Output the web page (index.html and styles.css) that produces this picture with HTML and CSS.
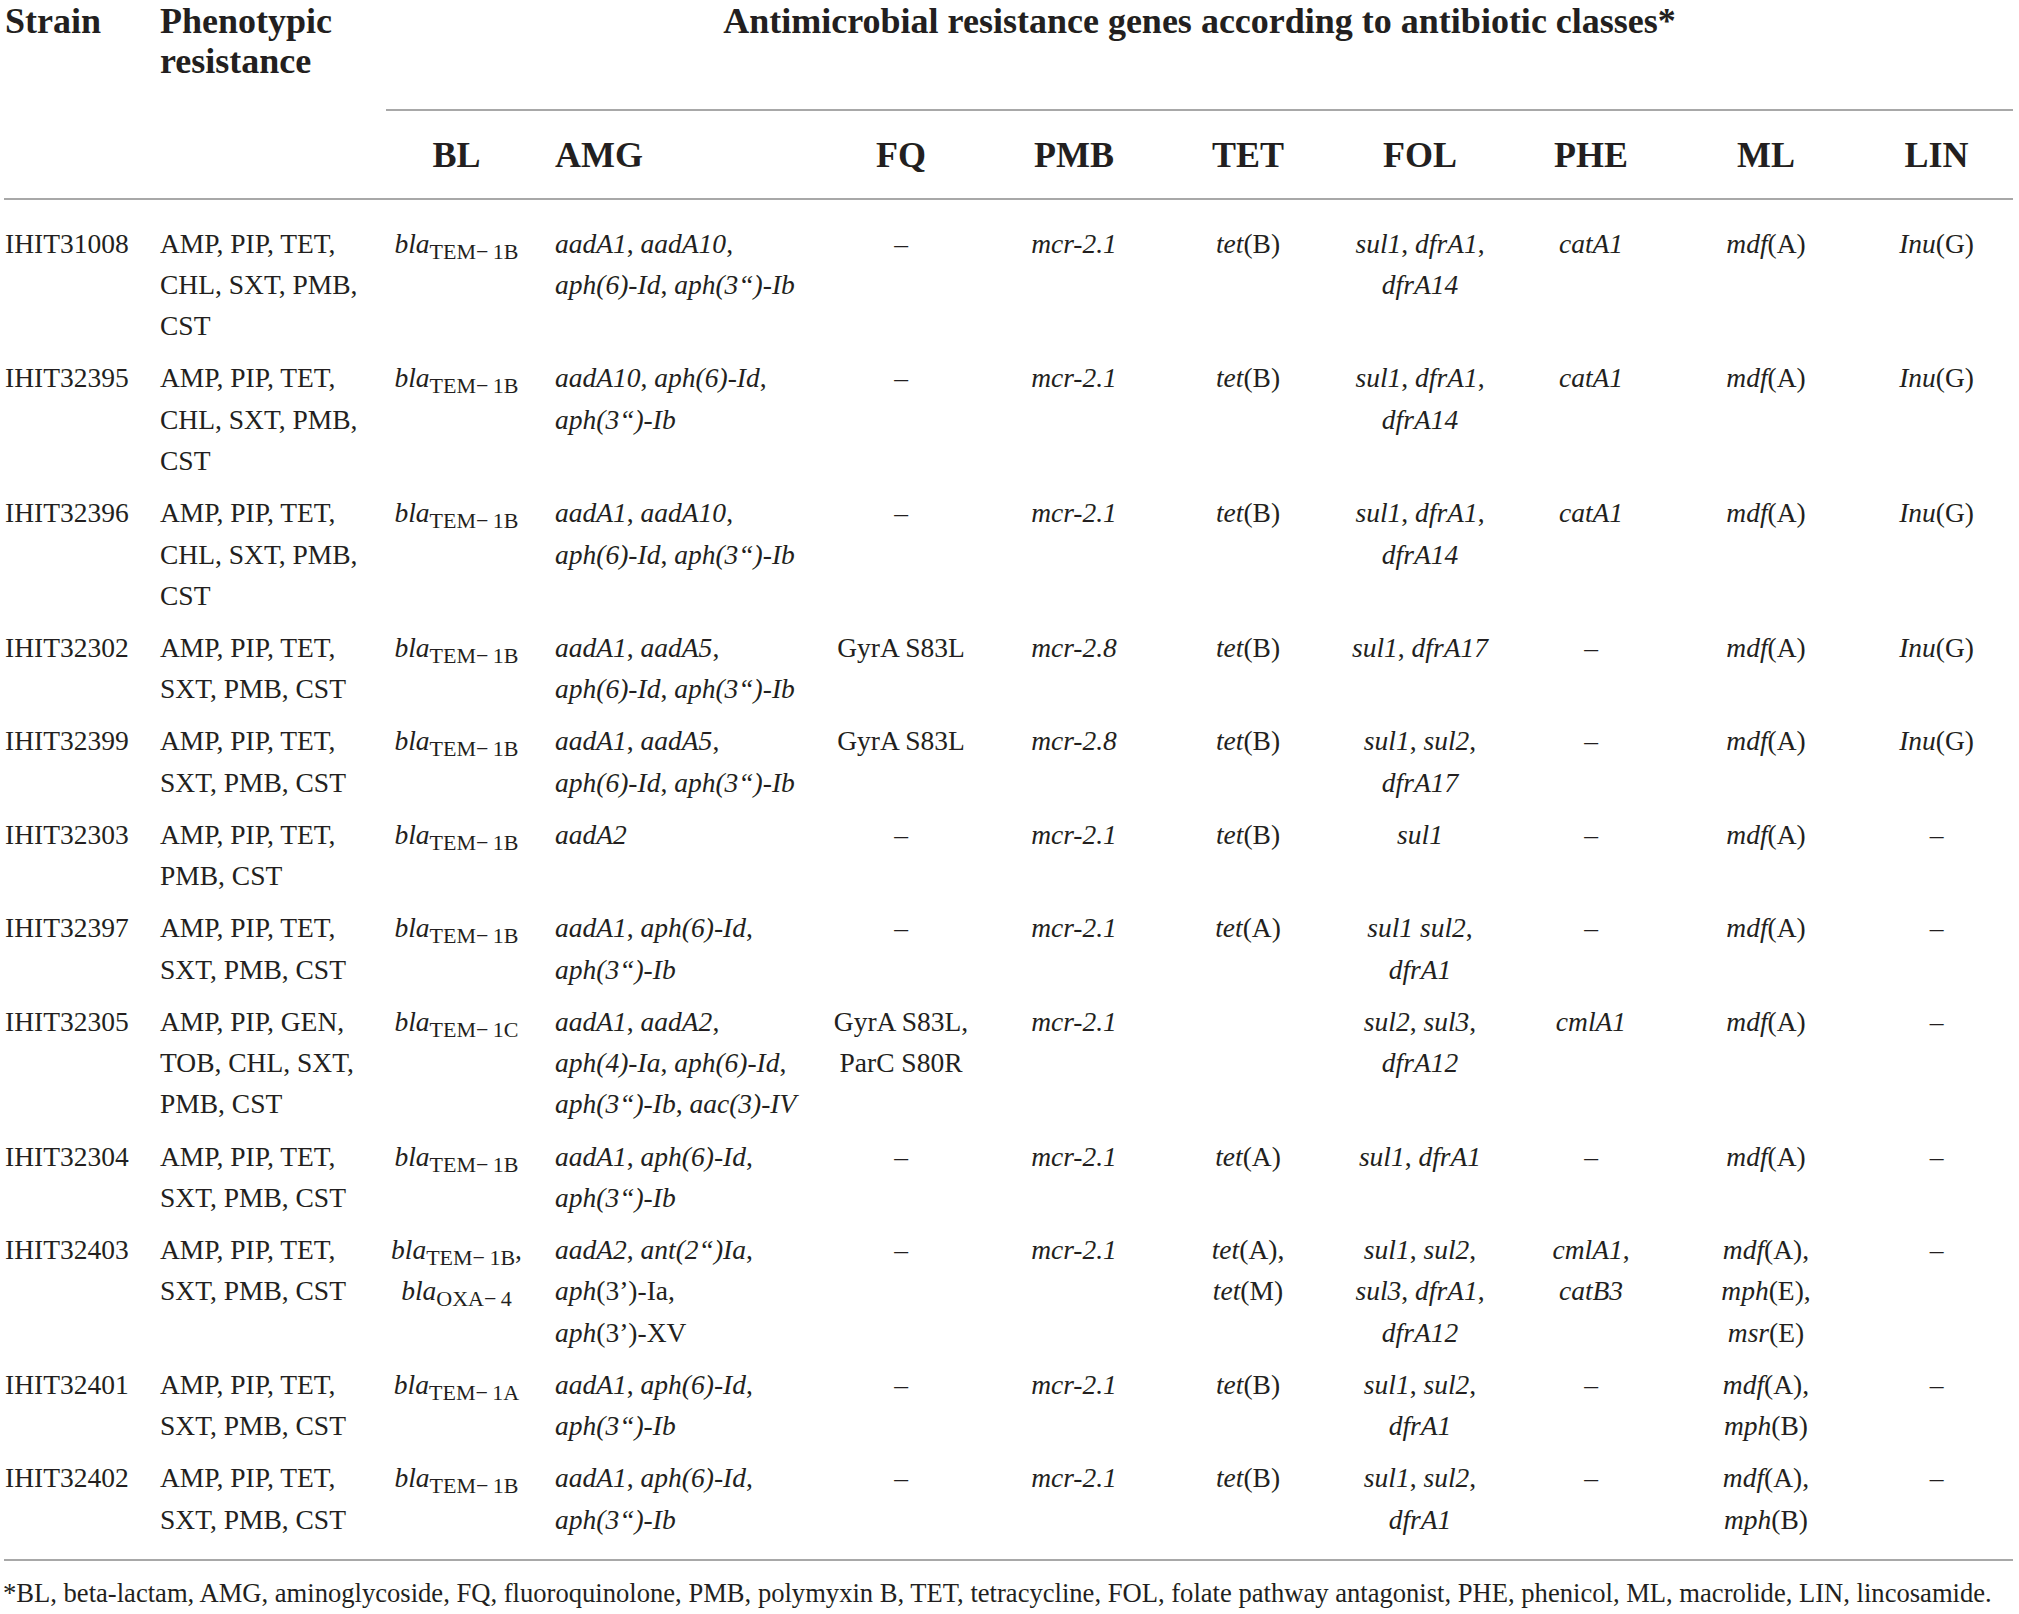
FILE: index.html
```html
<!DOCTYPE html>
<html lang="en">
<head>
    <meta charset="UTF-8">
    <meta name="viewport" content="width=device-width, initial-scale=1.0">
    <title>Antimicrobial resistance genes</title>
    <link rel="stylesheet" href="styles.css">
</head>
<body>
    <table class="amr">
        <colgroup>
            <col class="w-strain">
            <col class="w-pheno">
            <col class="w-bl">
            <col class="w-amg">
            <col class="w-fq">
            <col class="w-pmb">
            <col class="w-tet">
            <col class="w-fol">
            <col class="w-phe">
            <col class="w-ml">
            <col class="w-lin">
        </colgroup>
        <thead>
            <tr class="group-row">
                <th rowspan="2" class="left strain">Strain</th>
                <th rowspan="2" class="left">Phenotypic<br>resistance</th>
                <th colspan="9" class="group">Antimicrobial resistance genes according to antibiotic classes*</th>
            </tr>
            <tr class="class-row">
                <th>BL</th>
                <th class="left amg">AMG</th>
                <th>FQ</th>
                <th>PMB</th>
                <th>TET</th>
                <th>FOL</th>
                <th>PHE</th>
                <th>ML</th>
                <th>LIN</th>
            </tr>
        </thead>
        <tbody>
            <tr>
                <td class="left strain">IHIT31008</td>
                <td class="left">AMP, PIP, TET,<br>CHL, SXT, PMB,<br>CST</td>
                <td><i>bla</i><span class="sub">TEM−&#8201;1B</span></td>
                <td class="left amg"><i>aadA1</i>, <i>aadA10</i>,<br><i>aph(6)-Id</i>, <i>aph(3“)-Ib</i></td>
                <td>–</td>
                <td><i>mcr-2.1</i></td>
                <td><i>tet</i>(B)</td>
                <td><i>sul1</i>, <i>dfrA1</i>,<br><i>dfrA14</i></td>
                <td><i>catA1</i></td>
                <td><i>mdf</i>(A)</td>
                <td><i>Inu</i>(G)</td>
            </tr>
            <tr>
                <td class="left strain">IHIT32395</td>
                <td class="left">AMP, PIP, TET,<br>CHL, SXT, PMB,<br>CST</td>
                <td><i>bla</i><span class="sub">TEM−&#8201;1B</span></td>
                <td class="left amg"><i>aadA10</i>, <i>aph(6)-Id</i>,<br><i>aph(3“)-Ib</i></td>
                <td>–</td>
                <td><i>mcr-2.1</i></td>
                <td><i>tet</i>(B)</td>
                <td><i>sul1</i>, <i>dfrA1</i>,<br><i>dfrA14</i></td>
                <td><i>catA1</i></td>
                <td><i>mdf</i>(A)</td>
                <td><i>Inu</i>(G)</td>
            </tr>
            <tr>
                <td class="left strain">IHIT32396</td>
                <td class="left">AMP, PIP, TET,<br>CHL, SXT, PMB,<br>CST</td>
                <td><i>bla</i><span class="sub">TEM−&#8201;1B</span></td>
                <td class="left amg"><i>aadA1</i>, <i>aadA10</i>,<br><i>aph(6)-Id</i>, <i>aph(3“)-Ib</i></td>
                <td>–</td>
                <td><i>mcr-2.1</i></td>
                <td><i>tet</i>(B)</td>
                <td><i>sul1</i>, <i>dfrA1</i>,<br><i>dfrA14</i></td>
                <td><i>catA1</i></td>
                <td><i>mdf</i>(A)</td>
                <td><i>Inu</i>(G)</td>
            </tr>
            <tr>
                <td class="left strain">IHIT32302</td>
                <td class="left">AMP, PIP, TET,<br>SXT, PMB, CST</td>
                <td><i>bla</i><span class="sub">TEM−&#8201;1B</span></td>
                <td class="left amg"><i>aadA1</i>, <i>aadA5</i>,<br><i>aph(6)-Id</i>, <i>aph(3“)-Ib</i></td>
                <td>GyrA S83L</td>
                <td><i>mcr-2.8</i></td>
                <td><i>tet</i>(B)</td>
                <td><i>sul1</i>, <i>dfrA17</i></td>
                <td>–</td>
                <td><i>mdf</i>(A)</td>
                <td><i>Inu</i>(G)</td>
            </tr>
            <tr>
                <td class="left strain">IHIT32399</td>
                <td class="left">AMP, PIP, TET,<br>SXT, PMB, CST</td>
                <td><i>bla</i><span class="sub">TEM−&#8201;1B</span></td>
                <td class="left amg"><i>aadA1</i>, <i>aadA5</i>,<br><i>aph(6)-Id</i>, <i>aph(3“)-Ib</i></td>
                <td>GyrA S83L</td>
                <td><i>mcr-2.8</i></td>
                <td><i>tet</i>(B)</td>
                <td><i>sul1</i>, <i>sul2</i>,<br><i>dfrA17</i></td>
                <td>–</td>
                <td><i>mdf</i>(A)</td>
                <td><i>Inu</i>(G)</td>
            </tr>
            <tr>
                <td class="left strain">IHIT32303</td>
                <td class="left">AMP, PIP, TET,<br>PMB, CST</td>
                <td><i>bla</i><span class="sub">TEM−&#8201;1B</span></td>
                <td class="left amg"><i>aadA2</i></td>
                <td>–</td>
                <td><i>mcr-2.1</i></td>
                <td><i>tet</i>(B)</td>
                <td><i>sul1</i></td>
                <td>–</td>
                <td><i>mdf</i>(A)</td>
                <td>–</td>
            </tr>
            <tr>
                <td class="left strain">IHIT32397</td>
                <td class="left">AMP, PIP, TET,<br>SXT, PMB, CST</td>
                <td><i>bla</i><span class="sub">TEM−&#8201;1B</span></td>
                <td class="left amg"><i>aadA1</i>, <i>aph(6)-Id</i>,<br><i>aph(3“)-Ib</i></td>
                <td>–</td>
                <td><i>mcr-2.1</i></td>
                <td><i>tet</i>(A)</td>
                <td><i>sul1 sul2</i>,<br><i>dfrA1</i></td>
                <td>–</td>
                <td><i>mdf</i>(A)</td>
                <td>–</td>
            </tr>
            <tr>
                <td class="left strain">IHIT32305</td>
                <td class="left">AMP, PIP, GEN,<br>TOB, CHL, SXT,<br>PMB, CST</td>
                <td><i>bla</i><span class="sub">TEM−&#8201;1C</span></td>
                <td class="left amg"><i>aadA1</i>, <i>aadA2</i>,<br><i>aph(4)-Ia</i>, <i>aph(6)-Id</i>,<br><i>aph(3“)-Ib</i>, <i>aac(3)-IV</i></td>
                <td>GyrA S83L,<br>ParC S80R</td>
                <td><i>mcr-2.1</i></td>
                <td></td>
                <td><i>sul2</i>, <i>sul3</i>,<br><i>dfrA12</i></td>
                <td><i>cmlA1</i></td>
                <td><i>mdf</i>(A)</td>
                <td>–</td>
            </tr>
            <tr>
                <td class="left strain">IHIT32304</td>
                <td class="left">AMP, PIP, TET,<br>SXT, PMB, CST</td>
                <td><i>bla</i><span class="sub">TEM−&#8201;1B</span></td>
                <td class="left amg"><i>aadA1</i>, <i>aph(6)-Id</i>,<br><i>aph(3“)-Ib</i></td>
                <td>–</td>
                <td><i>mcr-2.1</i></td>
                <td><i>tet</i>(A)</td>
                <td><i>sul1</i>, <i>dfrA1</i></td>
                <td>–</td>
                <td><i>mdf</i>(A)</td>
                <td>–</td>
            </tr>
            <tr>
                <td class="left strain">IHIT32403</td>
                <td class="left">AMP, PIP, TET,<br>SXT, PMB, CST</td>
                <td><i>bla</i><span class="sub">TEM−&#8201;1B</span>,<br><i>bla</i><span class="sub">OXA−&#8201;4</span></td>
                <td class="left amg"><i>aadA2</i>, <i>ant(2“)Ia</i>,<br><i>aph</i>(3’)-Ia,<br><i>aph</i>(3’)-XV</td>
                <td>–</td>
                <td><i>mcr-2.1</i></td>
                <td><i>tet</i>(A),<br><i>tet</i>(M)</td>
                <td><i>sul1</i>, <i>sul2</i>,<br><i>sul3</i>, <i>dfrA1</i>,<br><i>dfrA12</i></td>
                <td><i>cmlA1</i>,<br><i>catB3</i></td>
                <td><i>mdf</i>(A),<br><i>mph</i>(E),<br><i>msr</i>(E)</td>
                <td>–</td>
            </tr>
            <tr>
                <td class="left strain">IHIT32401</td>
                <td class="left">AMP, PIP, TET,<br>SXT, PMB, CST</td>
                <td><i>bla</i><span class="sub">TEM−&#8201;1A</span></td>
                <td class="left amg"><i>aadA1</i>, <i>aph(6)-Id</i>,<br><i>aph(3“)-Ib</i></td>
                <td>–</td>
                <td><i>mcr-2.1</i></td>
                <td><i>tet</i>(B)</td>
                <td><i>sul1</i>, <i>sul2</i>,<br><i>dfrA1</i></td>
                <td>–</td>
                <td><i>mdf</i>(A),<br><i>mph</i>(B)</td>
                <td>–</td>
            </tr>
            <tr>
                <td class="left strain">IHIT32402</td>
                <td class="left">AMP, PIP, TET,<br>SXT, PMB, CST</td>
                <td><i>bla</i><span class="sub">TEM−&#8201;1B</span></td>
                <td class="left amg"><i>aadA1</i>, <i>aph(6)-Id</i>,<br><i>aph(3“)-Ib</i></td>
                <td>–</td>
                <td><i>mcr-2.1</i></td>
                <td><i>tet</i>(B)</td>
                <td><i>sul1</i>, <i>sul2</i>,<br><i>dfrA1</i></td>
                <td>–</td>
                <td><i>mdf</i>(A),<br><i>mph</i>(B)</td>
                <td>–</td>
            </tr>
        </tbody>
    </table>
    <p class="note">*BL, beta-lactam, AMG, aminoglycoside, FQ, fluoroquinolone, PMB, polymyxin B, TET, tetracycline, FOL, folate pathway antagonist, PHE, phenicol, ML, macrolide, LIN, lincosamide.</p>
</body>
</html>
```

FILE: styles.css
```css
body {
    margin: 0;
    background-color: #fff;
    color: #231f20;
    font-family: "Liberation Serif", "Times New Roman", serif;
}
.amr {
    border-collapse: collapse;
    table-layout: fixed;
    width: 2009px;
    margin-left: 4px;
    font-size: 27.5px;
    line-height: 41.3px;
}
.w-strain { width: 156px; }
.w-pheno { width: 226px; }
.w-bl { width: 141px; }
.w-amg { width: 293px; }
.w-fq { width: 162px; }
.w-pmb { width: 184px; }
.w-tet { width: 164px; }
.w-fol { width: 180px; }
.w-phe { width: 162px; }
.w-ml { width: 188px; }
.w-lin { width: 153px; }

.amr th {
    font-size: 36px;
    line-height: 40px;
    font-weight: bold;
    padding: 0;
}
.amr thead {
    border-bottom: 2px solid #a8a8a8;
}
.group-row {
    height: 110px;
}
.group-row th {
    vertical-align: top;
    padding-top: 1px;
}
.group-row th.group {
    text-align: center;
    border-bottom: 2px solid #a8a8a8;
}
.class-row {
    height: 89px;
}
.class-row th {
    vertical-align: middle;
    text-align: center;
}
.amr td {
    padding: 5.45px 0;
    vertical-align: top;
    text-align: center;
}
.amr .left {
    text-align: left;
}
.amr .strain {
    padding-left: 1px;
}
.amr .amg {
    padding-left: 28px;
}
.amr tbody {
    border-bottom: 2px solid #a8a8a8;
}
.amr tbody tr:first-child td {
    padding-top: 22.7px;
}
.amr tbody tr:last-child td {
    padding-bottom: 19px;
}
.sub {
    font-size: 0.8em;
    vertical-align: -0.26em;
    line-height: 0;
}
.note {
    margin: 17px 0 0 3px;
    font-size: 26.6px;
    line-height: 30px;
    white-space: nowrap;
}
```
